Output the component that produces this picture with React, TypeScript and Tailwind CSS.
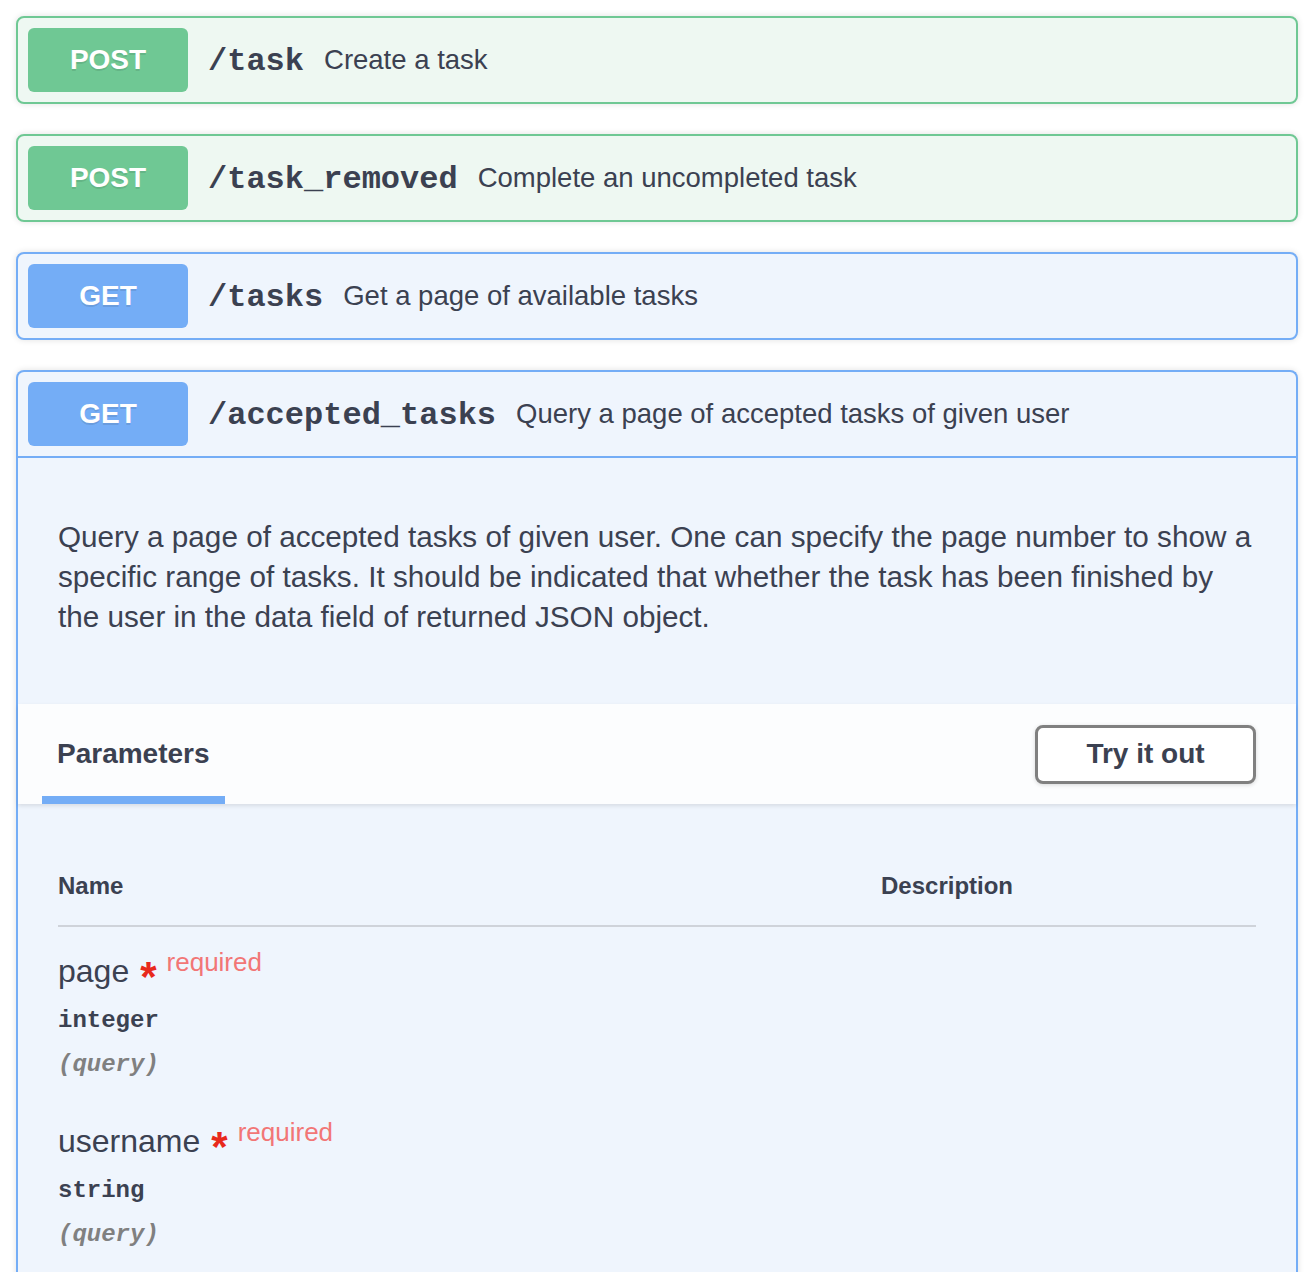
import React from 'react';

type Method = 'POST' | 'GET';

interface Endpoint {
  method: Method;
  path: string;
  summary: string;
}

const endpoints: Endpoint[] = [
  { method: 'POST', path: '/task', summary: 'Create a task' },
  { method: 'POST', path: '/task_removed', summary: 'Complete an uncompleted task' },
  { method: 'GET', path: '/tasks', summary: 'Get a page of available tasks' },
];

const sans = "font-['Liberation_Sans',Arial,sans-serif]";
const mono = "font-['Liberation_Mono','Courier_New',monospace]";

const blockStyles: Record<Method, { wrap: string; badge: string; line: string }> = {
  POST: {
    wrap: 'border-[#6fc894] bg-[#eef8f2]',
    badge: 'bg-[#6fc894]',
    line: 'border-[#6fc894]',
  },
  GET: {
    wrap: 'border-[#74adf6] bg-[#eff5fd]',
    badge: 'bg-[#74adf6]',
    line: 'border-[#74adf6]',
  },
};

const Summary: React.FC<{ ep: Endpoint; divider?: boolean }> = ({ ep, divider }) => (
  <div
    className={`flex items-center p-[10px] ${divider ? `border-b-2 ${blockStyles[ep.method].line}` : ''}`}
  >
    <div
      className={`${blockStyles[ep.method].badge} w-[160px] h-[64px] rounded-[6px] flex items-center justify-center text-white text-[28px] font-bold [text-shadow:0_2px_0_rgba(0,0,0,0.1)]`}
    >
      {ep.method}
    </div>
    <span className={`${mono} font-bold text-[32px] text-[#3b4151] px-[20px] relative top-[2px]`}>{ep.path}</span>
    <span className="text-[27.5px] text-[#3b4151]">{ep.summary}</span>
  </div>
);

const Param: React.FC<{ name: string; type: string }> = ({ name, type }) => (
  <div>
    <div className="h-[48px] flex items-center">
      <span className="text-[32px] leading-[48px] font-medium text-[#3b4151]">{name}</span>
      <span className="ml-[11px] text-[42px] leading-none font-bold text-[#e8291c] relative top-[6px]">*</span>
      <span className="ml-[10px] text-[26px] leading-none text-[#f27676] relative top-[-9px]">required</span>
    </div>
    <div className={`${mono} font-bold text-[24px] leading-[34px] mt-[9px] text-[#3b4151]`}>{type}</div>
    <div className={`${mono} font-bold italic text-[24px] leading-[34px] mt-[10px] text-[#808080]`}>
      (query)
    </div>
  </div>
);

export default function App() {
  const expanded: Endpoint = {
    method: 'GET',
    path: '/accepted_tasks',
    summary: 'Query a page of accepted tasks of given user',
  };

  return (
    <div className={`${sans} bg-white min-h-[1272px] pt-[16px] pl-[16px] pr-[18px] text-[#3b4151]`}>
      {endpoints.map(ep => (
        <div
          key={ep.path}
          className={`border-2 rounded-[8px] mb-[30px] shadow-[0_0_6px_rgba(0,0,0,0.12)] ${blockStyles[ep.method].wrap}`}
        >
          <Summary ep={ep} />
        </div>
      ))}

      <div
        className={`border-2 border-b-0 rounded-t-[8px] shadow-[0_0_6px_rgba(0,0,0,0.12)] ${blockStyles.GET.wrap}`}
      >
        <Summary ep={expanded} divider />

        <div className="px-[40px] pt-[59px] pb-[67px]">
          <p className="text-[29.7px] leading-[40px] text-[#3b4151] whitespace-nowrap">
            Query a page of accepted tasks of given user. One can specify the page number to show a
            <br />
            specific range of tasks. It should be indicated that whether the task has been finished by
            <br />
            the user in the data field of returned JSON object.
          </p>
        </div>

        <div className="h-[100px] bg-[#fcfdfe] shadow-[0_2px_4px_rgba(0,0,0,0.1)] flex items-stretch justify-between pl-[24px] pr-[40px] relative">
          <div className="relative flex items-center px-[15px]">
            <span className="text-[28px] font-bold text-[#3b4151]">Parameters</span>
            <div className="absolute left-0 right-0 bottom-0 h-[8px] bg-[#74adf6]" />
          </div>
          <div className="flex items-center">
            <button className="w-[221px] h-[59px] border-[3px] border-[#808080] rounded-[8px] bg-white text-[28px] font-bold text-[#3b4151] shadow-[0_1px_4px_rgba(0,0,0,0.15)]">
              Try it out
            </button>
          </div>
        </div>

        <div className="px-[40px] pt-[43px] pb-[40px]">
          <div className="flex border-b-2 border-[#cfd3da] pt-[24px] pb-[24px]">
            <div className="w-[823px] text-[24px] font-bold leading-[30px]">Name</div>
            <div className="text-[24px] font-bold leading-[30px]">Description</div>
          </div>
          <div className="pt-[20px]">
            <Param name="page" type="integer" />
            <div className="h-[35px]" />
            <Param name="username" type="string" />
          </div>
        </div>
      </div>
    </div>
  );
}
